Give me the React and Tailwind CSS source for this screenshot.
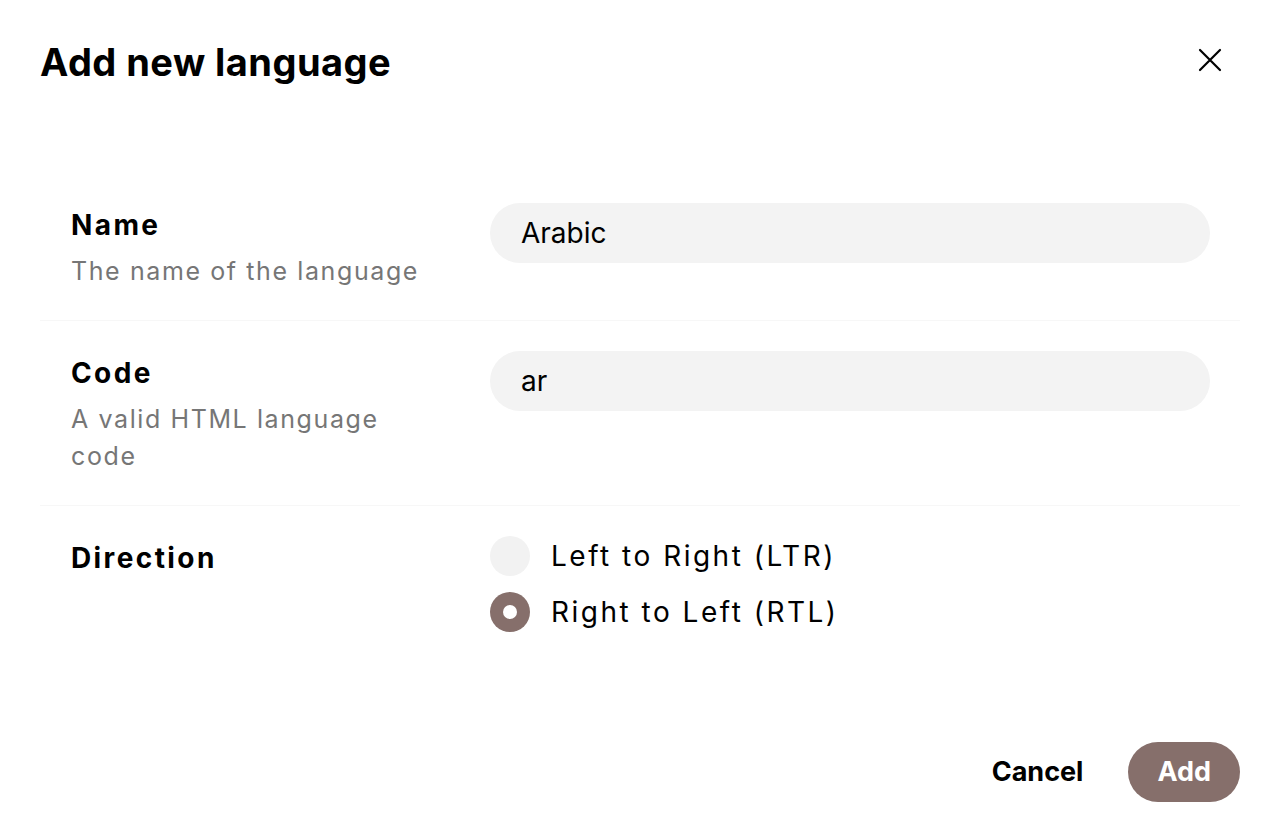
import React, { useState } from "react";

function Radio({ checked, label, onClick }) {
  return (
    <button type="button" onClick={onClick} className="flex items-center gap-[21px] h-10 text-left">
      {checked ? (
        <span className="w-10 h-10 rounded-full bg-[#866f6b] flex items-center justify-center">
          <span className="w-[14px] h-[14px] rounded-full bg-white" />
        </span>
      ) : (
        <span className="w-10 h-10 rounded-full bg-[#f2f2f2]" />
      )}
      <span className="text-[28px] leading-10 tracking-[2.5px] text-black">{label}</span>
    </button>
  );
}

function Row({ label, desc, children, last }) {
  return (
    <div className={"flex pt-[30px] pb-[30px] pl-[31px] pr-[30px] " + (last ? "" : "border-b border-[#f7f7f7]")}>
      <div className="w-[360px] shrink-0 mr-[59px]">
        <div className="mt-[2px] text-[28px] leading-10 font-bold tracking-[2.4px] text-black">{label}</div>
        {desc && <div className="mt-[8px] text-[25px] leading-[37px] tracking-[1.6px] text-[#767676]">{desc}</div>}
      </div>
      <div className="flex-1">{children}</div>
    </div>
  );
}

export default function App() {
  const [dir, setDir] = useState("rtl");
  return (
    <div className="w-[1264px] h-[830px] bg-white overflow-hidden flex flex-col pl-[40px] pr-[24px]" style={{ fontFamily: "Inter, 'Noto Sans', sans-serif" }}>
      <div className="flex items-center justify-between h-[124px]">
        <h1 className="text-[38px] font-bold tracking-[0.45px] text-black leading-none">Add new language</h1>
        <button type="button" className="mr-[18px] mb-[4px] text-black">
          <svg width="24" height="24" viewBox="0 0 24 24" fill="none" stroke="currentColor" strokeWidth="2.2" strokeLinecap="round">
            <path d="M2 2 L22 22 M22 2 L2 22" />
          </svg>
        </button>
      </div>
      <div className="mt-[49px]">
        <Row label="Name" desc="The name of the language">
          <div className="h-[60px] rounded-full bg-[#f3f3f3] flex items-center pl-[31px] text-[28px] text-black">Arabic</div>
        </Row>
        <Row label="Code" desc="A valid HTML language code">
          <div className="h-[60px] rounded-full bg-[#f3f3f3] flex items-center pl-[31px] text-[28px] text-black">ar</div>
        </Row>
        <Row label="Direction" last>
          <div className="flex flex-col gap-4">
            <Radio checked={dir === "ltr"} label="Left to Right (LTR)" onClick={() => setDir("ltr")} />
            <Radio checked={dir === "rtl"} label="Right to Left (RTL)" onClick={() => setDir("rtl")} />
          </div>
        </Row>
      </div>
      <div className="mt-auto mb-[28px] flex justify-end items-center gap-[45px]">
        <button type="button" className="text-[27px] font-bold text-black">Cancel</button>
        <button type="button" className="h-[60px] px-[29px] rounded-full bg-[#866f6b] text-white text-[27px] font-bold">Add</button>
      </div>
    </div>
  );
}
